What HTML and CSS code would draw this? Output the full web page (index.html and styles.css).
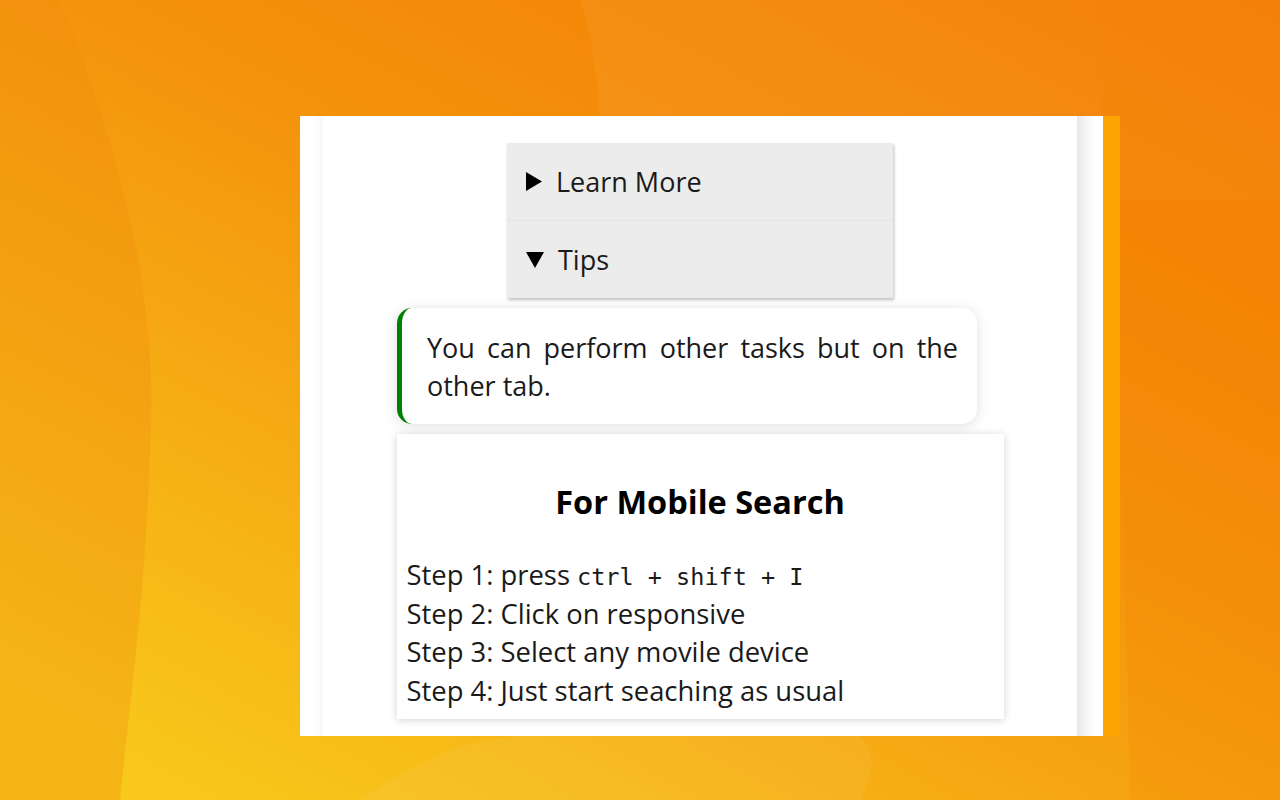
FILE: index.html
```html
<!DOCTYPE html>
<html lang="en">
<head>
<meta charset="utf-8">
<title>Tips</title>
<link rel="stylesheet" href="styles.css">
</head>
<body>
<svg class="bg" width="1280" height="800" viewBox="0 0 1280 800" aria-hidden="true">
  <defs>
    <linearGradient id="g" x1="1" y1="0" x2="0.15" y2="1">
      <stop offset="0" stop-color="#f47a00"/>
      <stop offset="0.45" stop-color="#f4920c"/>
      <stop offset="1" stop-color="#f8c81b"/>
    </linearGradient>
  </defs>
  <rect width="1280" height="800" fill="url(#g)"/>
  <path d="M0 0 L60 0 C120 150 160 300 150 450 C145 600 130 700 120 800 L0 800 Z" fill="#f08a0c" opacity="0.3"/>
  <path d="M580 0 C600 60 600 120 600 200 L1280 200 L1280 0 Z" fill="#ffffff" opacity="0.05"/>
  <path d="M1095 0 C1110 200 1125 500 1130 800 L1280 800 L1280 0 Z" fill="#f38000" opacity="0.2"/>
  <path d="M360 800 C420 760 460 740 520 736 L860 736 C880 760 870 780 860 800 Z" fill="#ffffff" opacity="0.06"/>
</svg>
<div class="stage">
  <div class="panel">
    <div class="inner">
      <div class="acc">
        <div class="acc-row">
          <svg class="tri" width="16" height="19" viewBox="0 0 16 19"><path d="M0 0 L16 9.5 L0 19 Z" fill="#000"/></svg>
          <span>Learn More</span>
        </div>
        <div class="acc-row acc-row-open">
          <svg class="tri" width="18" height="16" viewBox="0 0 18 16"><path d="M0 0 L18 0 L9 16 Z" fill="#000"/></svg>
          <span>Tips</span>
        </div>
      </div>
      <div class="tip">You can perform other tasks but on the other tab.</div>
      <div class="mobile">
        <h2 class="mobile-title">For Mobile Search</h2>
        <div class="steps">
          <div class="step">Step 1: press <code>ctrl + shift + I</code></div>
          <div class="step">Step 2: Click on responsive</div>
          <div class="step">Step 3: Select any movile device</div>
          <div class="step">Step 4: Just start seaching as usual</div>
        </div>
      </div>
    </div>
  </div>
  <div class="strip"></div>
</div>
</body>
</html>
```

FILE: styles.css
```css
html, body {
  margin: 0;
  padding: 0;
}
body {
  width: 1280px;
  height: 800px;
  overflow: hidden;
  position: relative;
  font-family: "Open Sans", "Noto Sans", sans-serif;
  color: #111;
}
.bg {
  position: absolute;
  left: 0;
  top: 0;
  z-index: 0;
}
.stage {
  position: relative;
  z-index: 1;
  display: flex;
  padding: 116px 0 0 300px;
}
.panel {
  width: 803px;
  height: 620px;
  background: #fff;
  overflow: hidden;
  padding-left: 23px;
  box-sizing: border-box;
}
.strip {
  width: 17px;
  height: 620px;
  background: #fca402;
}
.inner {
  width: 754px;
  min-height: 720px;
  margin-top: -30px;
  padding-top: 57px;
  box-sizing: border-box;
  background: #fff;
  box-shadow: 5px 0 16px rgba(0, 0, 0, 0.13);
  display: flex;
  flex-direction: column;
  align-items: center;
}
.acc {
  width: 386px;
  background: #ececec;
  box-shadow: 1px 2px 3px rgba(0, 0, 0, 0.25);
}
.acc-row {
  height: 77px;
  display: flex;
  align-items: center;
  gap: 14px;
  padding-left: 19px;
  font-size: 27px;
  color: #1a1a1a;
}
.acc-row-open {
  border-top: 1px solid #e4e4e4;
  height: 77px;
}
.tri {
  display: block;
}
.tip {
  align-self: flex-start;
  margin: 10px 0 0 74px;
  width: 580px;
  height: 116px;
  box-sizing: border-box;
  border-left: 5px solid #008000;
  border-radius: 15px;
  background: #fff;
  box-shadow: 0 2px 14px rgba(0, 0, 0, 0.13);
  padding: 21px 19px 0 25px;
  font-size: 27px;
  line-height: 38px;
  text-align: justify;
  color: #1a1a1a;
}
.mobile {
  margin-top: 10px;
  width: 607px;
  height: 285px;
  box-sizing: border-box;
  background: #fff;
  box-shadow: 0 1px 8px rgba(0, 0, 0, 0.18);
  padding: 0 10px;
}
.mobile-title {
  margin: 0;
  padding-top: 45px;
  text-align: center;
  font-size: 32.5px;
  line-height: 46px;
  font-weight: 700;
  color: #000;
}
.steps {
  margin-top: 31px;
  font-size: 27.4px;
  color: #1a1a1a;
}
.step {
  height: 38.5px;
  line-height: 38.5px;
}
.steps code {
  font-family: "DejaVu Sans Mono", "Liberation Mono", monospace;
  font-size: 23.5px;
  line-height: 1;
}
```
